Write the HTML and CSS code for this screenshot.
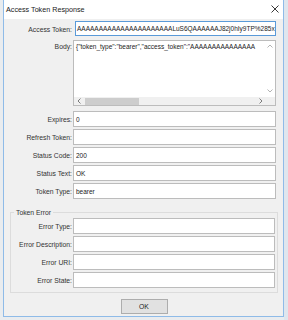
FILE: index.html
```html
<!DOCTYPE html>
<html>
<head>
<meta charset="utf-8">
<link rel="stylesheet" href="styles.css">
</head>
<body>
<div class="backdrop">
  <div class="window">
    <div class="titlebar">
      <span class="title">Access Token Response</span>
      <svg class="close" width="8" height="8" viewBox="0 0 8 8"><path d="M0.5 0.5 L7.5 7.5 M7.5 0.5 L0.5 7.5" stroke="#222" stroke-width="0.9" fill="none"/></svg>
    </div>
    <div class="content">
      <div class="form">
        <label class="lbl">Access Token:</label>
        <div class="field focus"><span class="val">AAAAAAAAAAAAAAAAAAAAAALuS6QAAAAAAJ82j0hIy9TP%285x</span></div>

        <label class="lbl lbl-top">Body:</label>
        <div class="textarea">
          <div class="ta-main">
            <div class="ta-text">{"token_type":"bearer","access_token":"AAAAAAAAAAAAAAA</div>
            <div class="vscroll">
              <svg width="6" height="4" viewBox="0 0 6 4"><path d="M0.5 3.5 L3 1 L5.5 3.5" stroke="#a0a0a0" stroke-width="0.8" fill="none"/></svg>
              <svg width="6" height="4" viewBox="0 0 6 4"><path d="M0.5 0.5 L3 3 L5.5 0.5" stroke="#a0a0a0" stroke-width="0.8" fill="none"/></svg>
            </div>
          </div>
          <div class="hscroll">
            <svg class="harrow" width="4" height="6" viewBox="0 0 4 6"><path d="M3.5 0.5 L1 3 L3.5 5.5" stroke="#606060" stroke-width="0.8" fill="none"/></svg>
            <div class="htrack"><div class="hthumb"></div></div>
            <svg class="harrow" width="4" height="6" viewBox="0 0 4 6"><path d="M0.5 0.5 L3 3 L0.5 5.5" stroke="#606060" stroke-width="0.8" fill="none"/></svg>
            <div class="corner"></div>
          </div>
        </div>

        <label class="lbl">Expires:</label>
        <div class="field"><span class="val">0</span></div>
        <label class="lbl">Refresh Token:</label>
        <div class="field"><span class="val"></span></div>
        <label class="lbl">Status Code:</label>
        <div class="field"><span class="val">200</span></div>
        <label class="lbl">Status Text:</label>
        <div class="field"><span class="val">OK</span></div>
        <label class="lbl">Token Type:</label>
        <div class="field"><span class="val">bearer</span></div>
      </div>

      <fieldset class="group">
        <legend class="legend">Token Error</legend>
        <div class="gform">
          <label class="lbl">Error Type:</label>
          <div class="field"></div>
          <label class="lbl">Error Description:</label>
          <div class="field"></div>
          <label class="lbl">Error URI:</label>
          <div class="field"></div>
          <label class="lbl">Error State:</label>
          <div class="field"></div>
        </div>
      </fieldset>

      <div class="buttons">
        <button class="ok">OK</button>
      </div>
    </div>
  </div>
  <div class="behind"></div>
</div>
</body>
</html>
```
FILE: styles.css
```css
* { box-sizing: border-box; }
html, body { margin: 0; padding: 0; }
body {
  width: 288px;
  height: 320px;
  overflow: hidden;
  background: #e9ecef;
  font-family: "Liberation Sans", Arial, sans-serif;
}
.backdrop {
  padding-left: 3px;
  display: flex;
}
.window {
  width: 281px;
  height: 317px;
  background: #f0f0f0;
  border: 1px solid #8fbbe8;
  border-top: none;
  display: flex;
  flex-direction: column;
  flex: none;
}
.behind {
  flex: 1;
  height: 320px;
  background: #dfe6ee;
}
.titlebar {
  height: 19px;
  background: #ffffff;
  display: flex;
  align-items: center;
  justify-content: space-between;
  padding: 0 4px 1px 2px;
}
.title {
  font-size: 7.2px;
  color: #1a1a1a;
}
.content {
  flex: 1;
  display: flex;
  flex-direction: column;
  padding-top: 2px;
}
.form {
  display: grid;
  grid-template-columns: 68px 203px;
  column-gap: 1px;
  row-gap: 2px;
}
.lbl {
  font-size: 6.8px;
  color: #333;
  text-align: right;
  align-self: center;
  white-space: nowrap;
}
.lbl-top { align-self: start; padding-top: 3px; }
.field {
  height: 16px;
  background: #fff;
  border: 1px solid #bcbcbc;
  display: flex;
  align-items: center;
  padding-left: 2px;
  overflow: hidden;
  white-space: nowrap;
}
.field.focus {
  border-color: #5a9ad8;
  margin-left: 2px;
  width: 201px;
  height: 15px;
  margin-bottom: 2px;
  padding-left: 1px;
}
.val {
  font-size: 6.5px;
  color: #222;
}
.textarea {
  height: 66px;
  background: #fff;
  border: 1px solid #bcbcbc;
  display: flex;
  flex-direction: column;
  margin-bottom: 3px;
}
.ta-main {
  flex: 1;
  display: flex;
  min-height: 0;
}
.ta-text {
  flex: 1;
  font-size: 6.5px;
  color: #222;
  white-space: nowrap;
  overflow: hidden;
  padding: 2px 0 0 2px;
}
.vscroll {
  width: 10px;
  background: #ffffff;
  display: flex;
  flex-direction: column;
  align-items: center;
  justify-content: space-between;
  padding: 3px 0 4px;
}
.hscroll {
  height: 8px;
  display: flex;
  align-items: center;
  background: #f0f0f0;
}
.harrow { margin: 0 2px 0 3px; flex: none; }
.htrack {
  flex: 1;
  height: 8px;
  display: flex;
  align-items: center;
}
.hthumb {
  width: 54px;
  height: 7px;
  background: #cdcdcd;
  margin-left: 2px;
}
.corner {
  width: 10px;
  height: 8px;
  background: #f0f0f0;
}
.group {
  margin: 10px 0 0 6px;
  width: 268px;
  border: 1px solid #dcdcdc;
  padding: 2px 3px 4px 0;
  min-width: 0;
}
.legend {
  font-size: 6.8px;
  color: #333;
  padding: 0 2px;
  margin-left: 3px;
}
.gform {
  display: grid;
  grid-template-columns: 61px 202px;
  column-gap: 1px;
  row-gap: 2px;
}
.buttons {
  display: flex;
  justify-content: center;
  margin-top: 6px;
  padding-left: 1px;
}
.ok {
  width: 47px;
  height: 15px;
  background: #e1e1e1;
  border: 1px solid #adadad;
  font-family: "Liberation Sans", Arial, sans-serif;
  font-size: 6.8px;
  color: #222;
  padding: 0;
}
```
